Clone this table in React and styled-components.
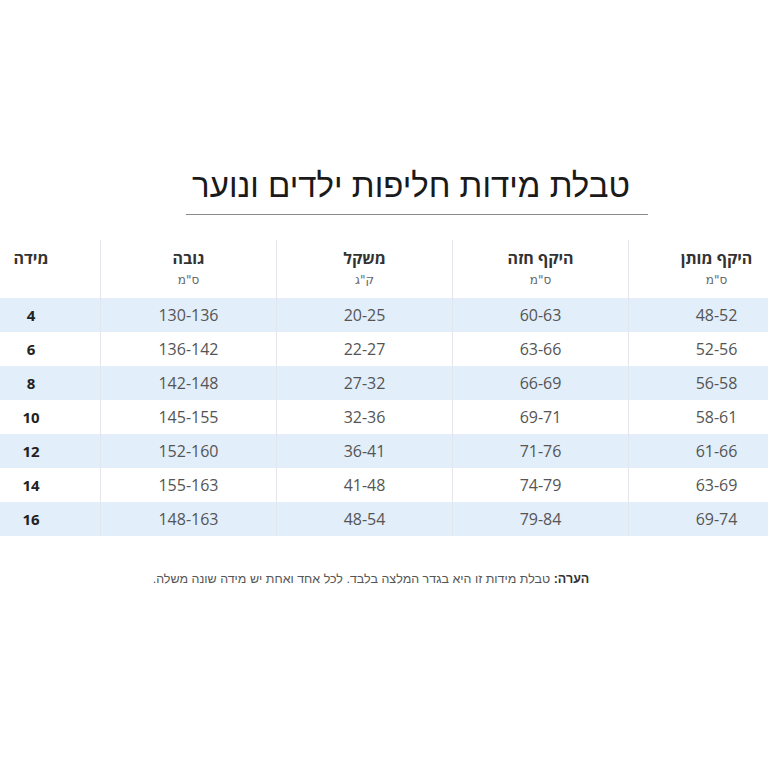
import React from "react";
import styled, { createGlobalStyle } from "styled-components";

const GlobalStyle = createGlobalStyle`
  html, body {
    margin: 0;
    padding: 0;
    background: #ffffff;
  }
  body {
    font-family: "Open Sans", "Noto Sans", "Liberation Sans", sans-serif;
  }
`;

const Page = styled.div`
  width: 768px;
  height: 768px;
  overflow: hidden;
  padding-top: 166px;
  box-sizing: border-box;
`;

const TitleBlock = styled.div`
  display: flex;
  flex-direction: column;
  align-items: center;
  margin-left: 66px;
`;

const Title = styled.h1`
  margin: 0;
  padding-right: 12px;
  direction: rtl;
  font-family: "Liberation Sans", "Noto Sans", sans-serif;
  font-weight: 400;
  font-size: 33px;
  line-height: 40px;
  color: #1a1a1a;
`;

const Rule = styled.div`
  width: 462px;
  height: 1px;
  margin-top: 8px;
  background: #8a8a8a;
`;

const Table = styled.div`
  margin-top: 25px;
  width: 804px;
  display: grid;
  grid-template-columns: 100px 176px 176px 176px 176px;
`;

const HeadCell = styled.div`
  height: 58px;
  box-sizing: border-box;
  padding-top: 8px;
  display: flex;
  flex-direction: column;
  align-items: center;
  justify-content: flex-start;
  border-left: ${(p) => (p.$first ? "none" : "1px solid #e3e7eb")};
  padding-right: ${(p) => (p.$first ? "38px" : "0")};
  direction: rtl;
`;

const HeadLabel = styled.span`
  font-family: "Noto Sans", "Open Sans", sans-serif;
  font-weight: 700;
  font-size: 16px;
  line-height: 20px;
  color: #333;
`;

const HeadUnit = styled.span`
  margin-top: 5px;
  font-family: "DejaVu Sans", sans-serif;
  font-size: 12px;
  line-height: 14px;
  color: #666;
`;

const Cell = styled.div`
  height: 34px;
  display: flex;
  align-items: center;
  justify-content: center;
  background: ${(p) => (p.$shade ? "#e2eefa" : "#ffffff")};
  border-left: ${(p) => (p.$first ? "none" : "1px solid #e3e7eb")};
  padding-right: ${(p) => (p.$first ? "38px" : "0")};
  font-size: ${(p) => (p.$first ? "15px" : "16px")};
  font-weight: ${(p) => (p.$first ? 700 : 400)};
  color: ${(p) => (p.$first ? "#222" : "#555")};
`;

const Note = styled.p`
  margin: 36px 0 0 0;
  padding-right: 26px;
  text-align: center;
  direction: rtl;
  font-family: "Liberation Sans", "Noto Sans", sans-serif;
  font-size: 12.5px;
  color: #555;
`;

const NoteLabel = styled.b`
  color: #333;
`;

const headers = [
  { label: "מידה" },
  { label: "גובה", unit: 'ס"מ' },
  { label: "משקל", unit: 'ק"ג' },
  { label: "היקף חזה", unit: 'ס"מ' },
  { label: "היקף מותן", unit: 'ס"מ' },
];

const rows = [
  ["4", "130-136", "20-25", "60-63", "48-52"],
  ["6", "136-142", "22-27", "63-66", "52-56"],
  ["8", "142-148", "27-32", "66-69", "56-58"],
  ["10", "145-155", "32-36", "69-71", "58-61"],
  ["12", "152-160", "36-41", "71-76", "61-66"],
  ["14", "155-163", "41-48", "74-79", "63-69"],
  ["16", "148-163", "48-54", "79-84", "69-74"],
];

export default function App() {
  return (
    <>
      <GlobalStyle />
      <Page>
        <TitleBlock>
          <Title>טבלת מידות חליפות ילדים ונוער</Title>
          <Rule />
        </TitleBlock>
        <Table>
          {headers.map((h, i) => (
            <HeadCell key={h.label} $first={i === 0}>
              <HeadLabel>{h.label}</HeadLabel>
              {h.unit && <HeadUnit>{h.unit}</HeadUnit>}
            </HeadCell>
          ))}
          {rows.map((r, ri) =>
            r.map((v, ci) => (
              <Cell key={`${ri}-${ci}`} $shade={ri % 2 === 0} $first={ci === 0}>
                {v}
              </Cell>
            ))
          )}
        </Table>
        <Note>
          <NoteLabel>הערה:</NoteLabel> טבלת מידות זו היא בגדר המלצה בלבד. לכל אחד ואחת יש מידה שונה משלה.
        </Note>
      </Page>
    </>
  );
}
